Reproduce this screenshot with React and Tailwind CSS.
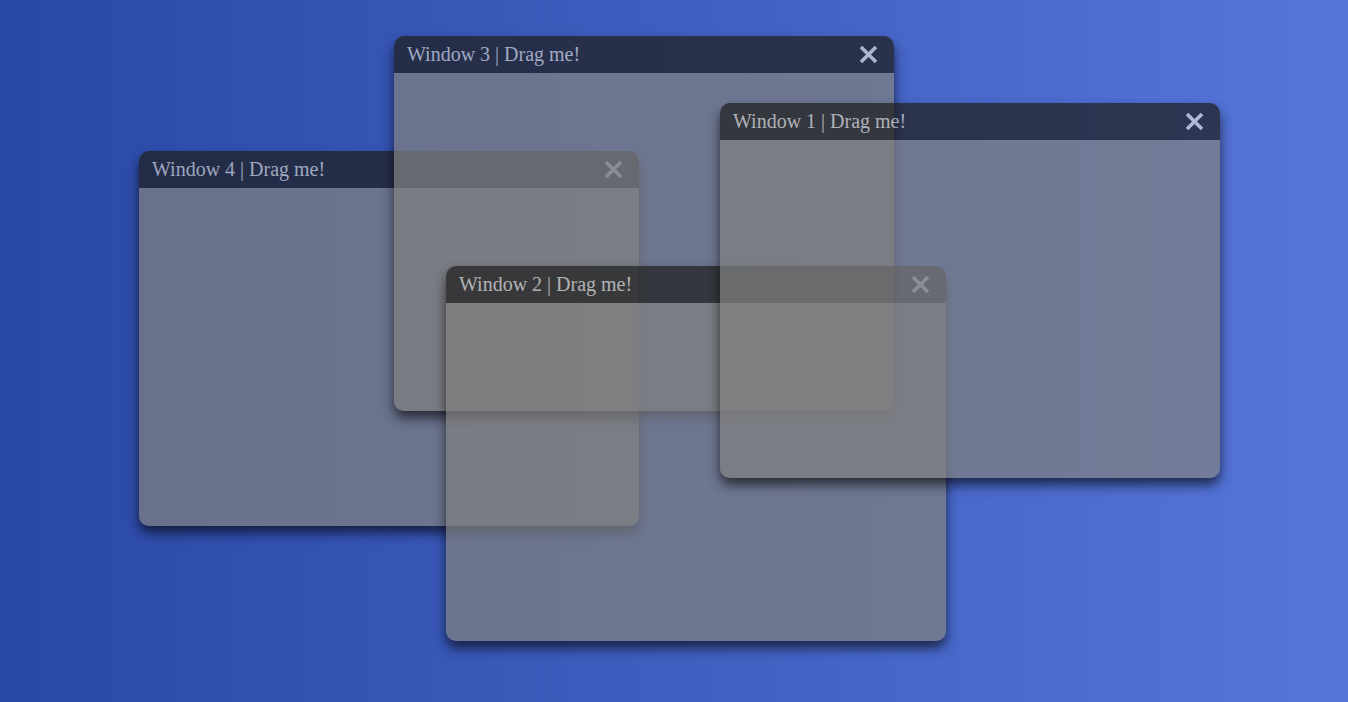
import React from 'react';

const windows = [
  { id: 4, left: 'left-[139px]', top: 'top-[151px]' },
  { id: 3, left: 'left-[394px]', top: 'top-[36px]' },
  { id: 2, left: 'left-[446px]', top: 'top-[266px]' },
  { id: 1, left: 'left-[720px]', top: 'top-[103px]' },
];

const CloseIcon = () => (
  <svg width="19" height="19" viewBox="0 0 19 19" className="shrink-0">
    <path d="M2 2 L17 17 M17 2 L2 17" stroke="#d4d4d4" strokeWidth="3.6" strokeLinecap="butt" />
  </svg>
);

const DragWindow = ({ id, left, top }) => (
  <div
    className={`absolute ${left} ${top} w-[500px] h-[375px] flex flex-col rounded-[10px] overflow-hidden opacity-[0.72] shadow-[0_7px_12px_rgba(0,0,0,0.85)]`}
  >
    {/* title bar */}
    <div className="h-[37px] flex items-center justify-between pl-[13px] pr-[16px] pb-[1px] bg-[#1f1f1f]">
      <span className="text-[20px] leading-none text-[#c8c8c8] font-['Liberation_Serif',serif]">
        Window {id} | Drag me!
      </span>
      <CloseIcon />
    </div>
    {/* body */}
    <div className="flex-1 bg-[#808080]" />
  </div>
);

export default function App() {
  return (
    <div className="relative w-full h-[702px] overflow-hidden bg-gradient-to-r from-[#2a48a6] to-[#5676da]">
      {windows.map((w) => (
        <DragWindow key={w.id} {...w} />
      ))}
    </div>
  );
}
